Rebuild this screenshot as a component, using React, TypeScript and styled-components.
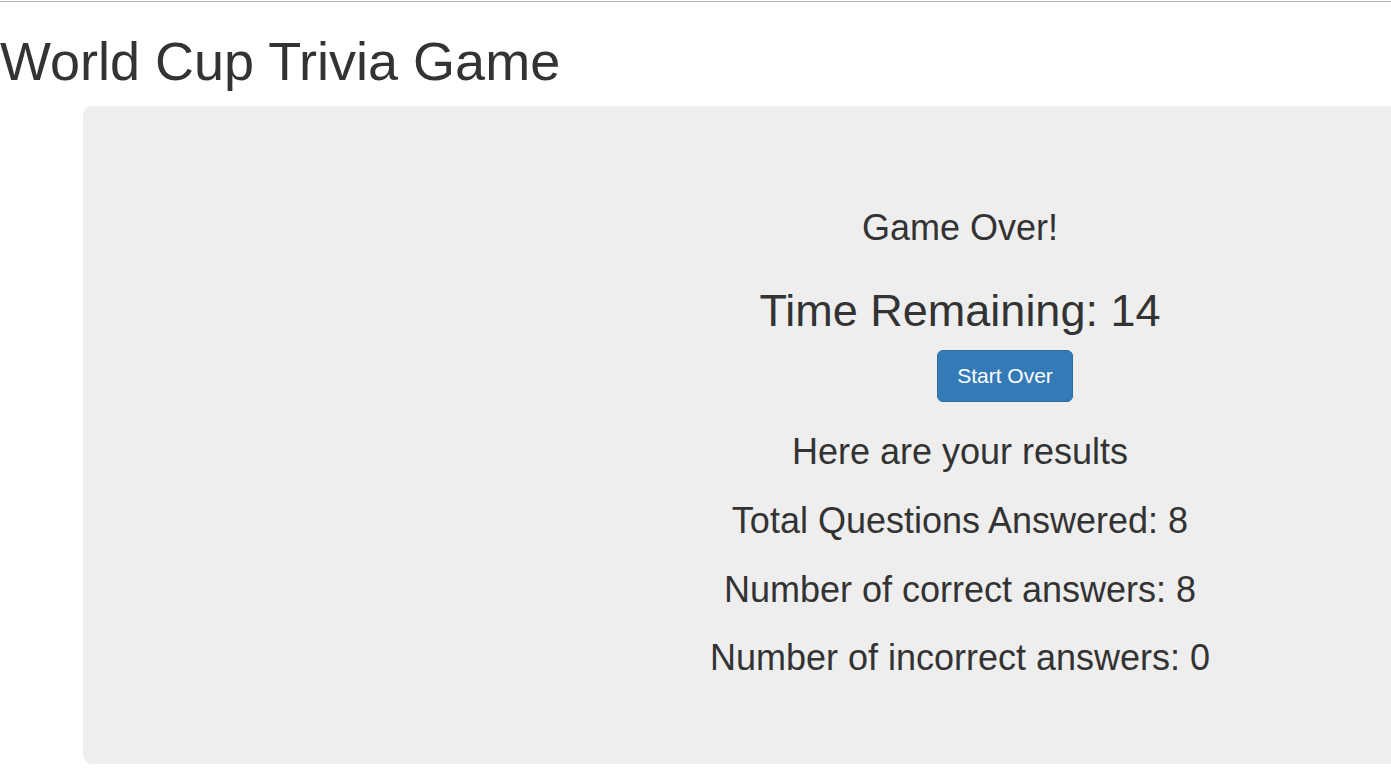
import React from "react";
import styled, { createGlobalStyle } from "styled-components";

const GlobalStyle = createGlobalStyle`
  html, body {
    margin: 0;
    padding: 0;
    overflow: hidden;
    background: #fff;
  }

  body {
    font-family: "Liberation Sans", Arial, Helvetica, sans-serif;
    color: #333;
  }
`;

const results = [
  { label: "Total Questions Answered", value: 8 },
  { label: "Number of correct answers", value: 8 },
  { label: "Number of incorrect answers", value: 0 },
];

const App = () => {
  const timeLeft = 14;

  return (
    <>
      <GlobalStyle />
      <TopRule />
      <Title>World Cup Trivia Game</Title>
      <Jumbotron>
        <Board>
          <Heading>Game Over!</Heading>
          <Timer>Time Remaining: {timeLeft}</Timer>
          <ButtonRow>
            <PrimaryButton type="button">Start Over</PrimaryButton>
          </ButtonRow>
          <Heading>Here are your results</Heading>
          {results.map((r) => (
            <Heading key={r.label} tight>
              {r.label}: {r.value}
            </Heading>
          ))}
        </Board>
      </Jumbotron>
    </>
  );
};

export default App;

const TopRule = styled.div`
  height: 1px;
  margin-top: 1px;
  background: #b5b5b5;
`;

const Title = styled.h1`
  margin: 30px 0 15px;
  font-size: 54px;
  font-weight: 500;
  line-height: 1.1;
  color: #333;
`;

const Jumbotron = styled.div`
  box-sizing: border-box;
  width: 1754px;
  margin-left: 83px;
  padding: 72px 90px 71px;
  background: #eee;
  border-radius: 9px;
`;

const Board = styled.div`
  text-align: center;
`;

const Heading = styled.h3<{ tight?: boolean }>`
  margin: ${(p) => (p.tight ? "29px" : "30px")} 0 15px;
  font-size: 36px;
  font-weight: 500;
  line-height: 1.1;
`;

const Timer = styled.h2`
  margin: 38px 0 15px;
  font-size: 45px;
  font-weight: 500;
  line-height: 1.1;
`;

const ButtonRow = styled.div`
  padding: 0;
`;

const PrimaryButton = styled.button`
  display: inline-block;
  margin-left: 90px;
  padding: 9px 19px;
  font-family: "Liberation Sans", Arial, sans-serif;
  font-size: 21px;
  line-height: 32px;
  color: #fff;
  background: #337ab7;
  border: 1px solid #2e6da4;
  border-radius: 6px;
  cursor: pointer;
`;
